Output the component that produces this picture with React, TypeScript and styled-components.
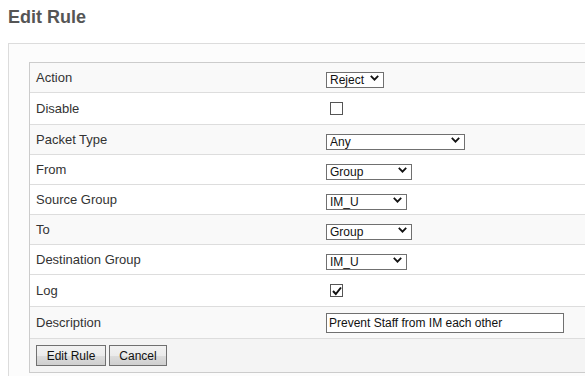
import React, { useState } from "react";
import styled, { createGlobalStyle } from "styled-components";

const Global = createGlobalStyle`
  html, body { margin: 0; padding: 0; overflow: hidden; background: #fff; }
  body { font-family: "Liberation Sans", Arial, sans-serif; color: #333; }
`;

const Title = styled.h1`
  margin: 0;
  padding: 7px 8px 0;
  font-size: 18px;
  line-height: 21px;
  font-weight: bold;
  color: #555;
`;

const Panel = styled.div`
  margin: 15px 0 0 8px;
  width: 640px;
  height: 400px;
  border: 1px solid #dcdcdc;
  background: #fcfcfc;
  padding: 18px 0 0 20px;
  box-sizing: border-box;
`;

const Table = styled.div`
  width: 600px;
  border: 1px solid #cccccc;
  display: flex;
  flex-direction: column;
  background: #fff;
`;

const Row = styled.div<{ $h: number; $bg: string; $last?: boolean }>`
  display: grid;
  grid-template-columns: 290px 1fr;
  height: ${(p) => p.$h}px;
  background: ${(p) => p.$bg};
  border-bottom: ${(p) => (p.$last ? "none" : "1px solid #dddddd")};
  box-sizing: border-box;
`;

const Label = styled.div`
  display: flex;
  align-items: center;
  padding: 0 6px;
  font-size: 13px;
  color: #333;
`;

const Value = styled.div`
  display: flex;
  align-items: center;
  padding: 0 6px;
`;

const SelectWrap = styled.div<{ $w: number }>`
  position: relative;
  width: ${(p) => p.$w}px;
  height: 16px;
`;

const NativeSelect = styled.select`
  appearance: none;
  -webkit-appearance: none;
  width: 100%;
  height: 100%;
  box-sizing: border-box;
  border: 1px solid #707070;
  border-radius: 0;
  background: #fff;
  padding: 0 14px 0 3px;
  margin: 0;
  font-family: "Liberation Sans", Arial, sans-serif;
  font-size: 12px;
  line-height: 14px;
  color: #111;
  outline: none;
`;

const Chevron = styled.svg`
  position: absolute;
  right: 5px;
  top: 5px;
  width: 9px;
  height: 6px;
  pointer-events: none;
`;

const Box = styled.span<{ $on?: boolean }>`
  position: relative;
  display: inline-block;
  width: 13px;
  height: 13px;
  margin-left: 4px;
  box-sizing: border-box;
  border: 1px solid #555;
  background: #fff;
  cursor: pointer;
`;

const Check = styled.svg`
  position: absolute;
  left: 1px;
  top: 1px;
  width: 10px;
  height: 10px;
`;

const TextInput = styled.input`
  width: 238px;
  height: 20px;
  box-sizing: border-box;
  border: 1px solid #707070;
  border-radius: 0;
  padding: 0 2px;
  margin: 0;
  font-family: "Liberation Sans", Arial, sans-serif;
  font-size: 12px;
  color: #111;
  outline: none;
`;

const ButtonRow = styled.div`
  display: flex;
  align-items: center;
  gap: 3px;
  height: 33px;
  padding: 0 6px;
  background: #f4f4f4;
`;

const Button = styled.button<{ $w: number }>`
  width: ${(p) => p.$w}px;
  height: 21px;
  box-sizing: border-box;
  border: 1px solid #707070;
  border-radius: 0;
  background: linear-gradient(#f2f2f2 0%, #ebebeb 50%, #dddddd 51%, #cfcfcf 100%);
  font-family: "Liberation Sans", Arial, sans-serif;
  font-size: 12px;
  color: #111;
  padding: 0;
  cursor: pointer;
`;

function Select({ w, options, value }: { w: number; options: string[]; value: string }) {
  const [v, setV] = useState(value);
  return (
    <SelectWrap $w={w}>
      <NativeSelect value={v} onChange={(e) => setV(e.target.value)}>
        {options.map((o) => (
          <option key={o}>{o}</option>
        ))}
      </NativeSelect>
      <Chevron viewBox="0 0 9 6">
        <path d="M0.8 0.8 L4.5 4.6 L8.2 0.8" fill="none" stroke="#111" strokeWidth="1.8" />
      </Chevron>
    </SelectWrap>
  );
}

function CheckBox({ initial }: { initial: boolean }) {
  const [on, setOn] = useState(initial);
  return (
    <Box $on={on} onClick={() => setOn(!on)}>
      {on && (
        <Check viewBox="0 0 10 10">
          <path d="M1 5 L3.8 8 L9 1.5" fill="none" stroke="#111" strokeWidth="2" />
        </Check>
      )}
    </Box>
  );
}

const GRAY = "#f9f9f9";
const WHITE = "#ffffff";

export default function App() {
  return (
    <>
      <Global />
      <Title>Edit Rule</Title>
      <Panel>
        <Table>
          <Row $h={30} $bg={GRAY}>
            <Label>Action</Label>
            <Value>
              <Select w={58} value="Reject" options={["Accept", "Reject"]} />
            </Value>
          </Row>
          <Row $h={32} $bg={WHITE}>
            <Label>Disable</Label>
            <Value>
              <CheckBox initial={false} />
            </Value>
          </Row>
          <Row $h={30} $bg={GRAY}>
            <Label>Packet Type</Label>
            <Value>
              <Select w={139} value="Any" options={["Any", "Chat", "File Transfer"]} />
            </Value>
          </Row>
          <Row $h={30} $bg={WHITE}>
            <Label>From</Label>
            <Value>
              <Select w={86} value="Group" options={["Any", "User", "Group"]} />
            </Value>
          </Row>
          <Row $h={30} $bg={WHITE}>
            <Label>Source Group</Label>
            <Value>
              <Select w={81} value="IM_U" options={["IM_U"]} />
            </Value>
          </Row>
          <Row $h={30} $bg={GRAY}>
            <Label>To</Label>
            <Value>
              <Select w={86} value="Group" options={["Any", "User", "Group"]} />
            </Value>
          </Row>
          <Row $h={30} $bg={WHITE}>
            <Label>Destination Group</Label>
            <Value>
              <Select w={81} value="IM_U" options={["IM_U"]} />
            </Value>
          </Row>
          <Row $h={32} $bg={WHITE}>
            <Label>Log</Label>
            <Value>
              <CheckBox initial={true} />
            </Value>
          </Row>
          <Row $h={32} $bg={GRAY}>
            <Label>Description</Label>
            <Value>
              <TextInput defaultValue="Prevent Staff from IM each other" />
            </Value>
          </Row>
          <ButtonRow>
            <Button $w={70}>Edit Rule</Button>
            <Button $w={58}>Cancel</Button>
          </ButtonRow>
        </Table>
      </Panel>
    </>
  );
}
